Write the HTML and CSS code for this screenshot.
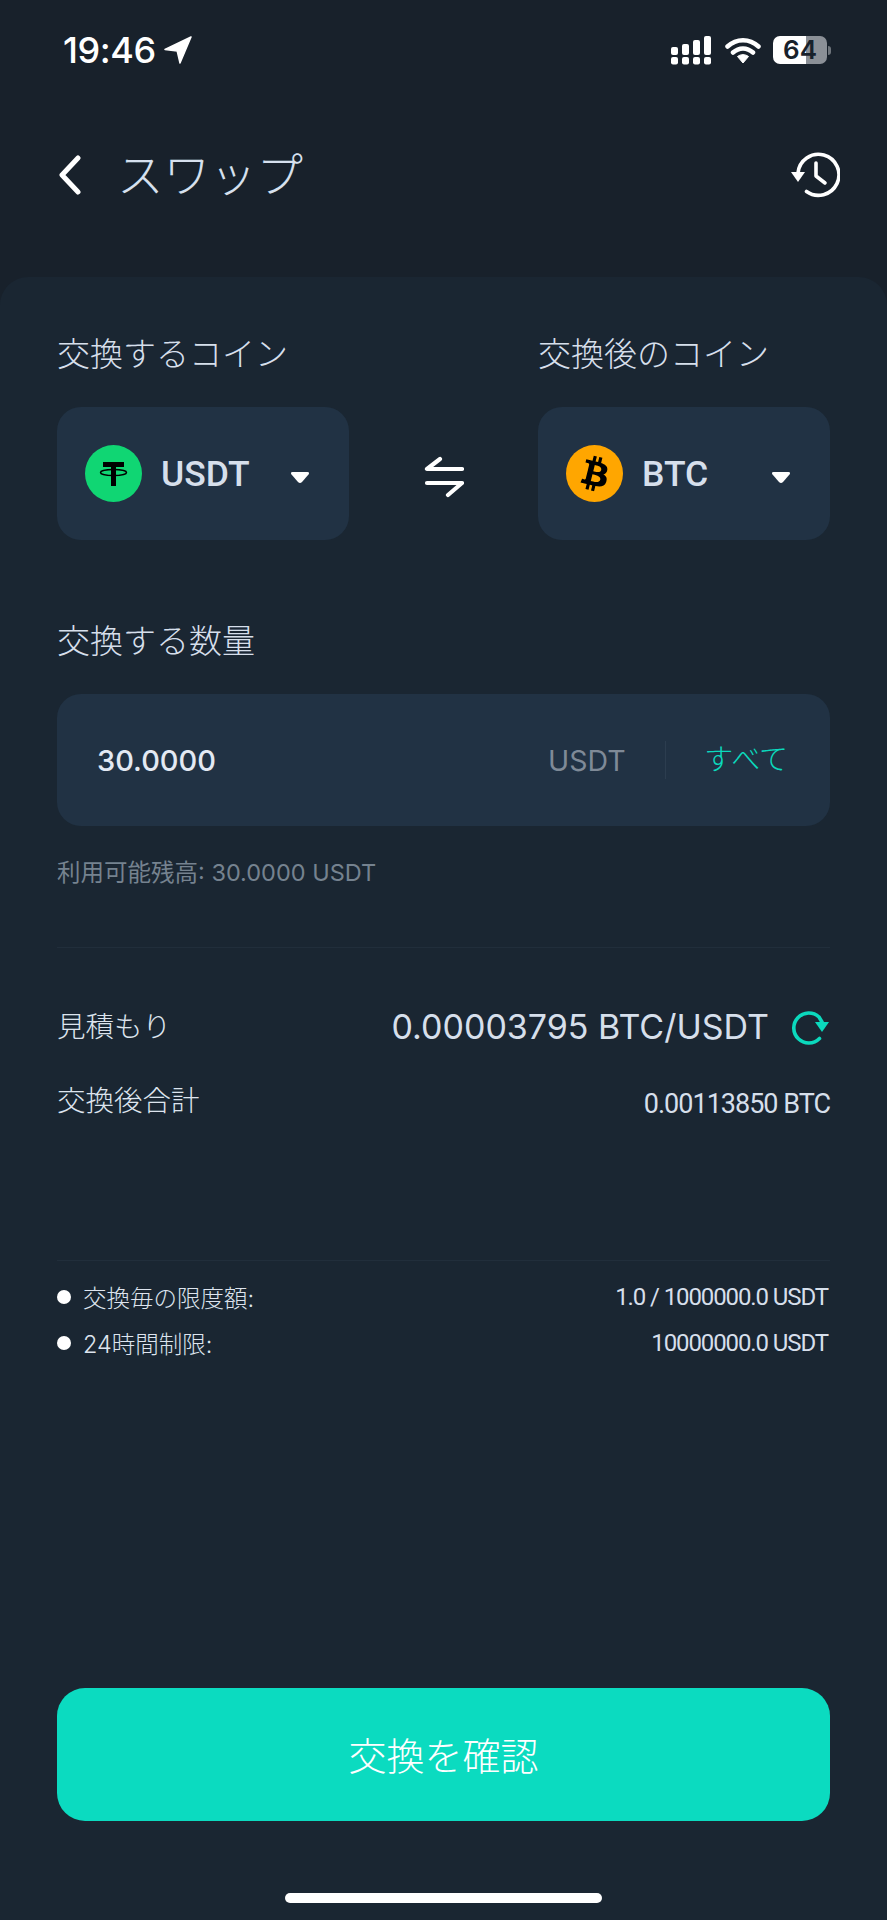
FILE: index.html
```html
<!DOCTYPE html>
<html lang="ja">
<head>
  <meta charset="UTF-8">
  <meta name="viewport" content="width=device-width, initial-scale=1.0">
  <title>スワップ</title>
  <link rel="stylesheet" href="styles.css">
</head>
<body>
  <div class="status-bar">
    <div class="status-time">
      <span>19:46</span>
      <svg class="status-arrow" viewBox="0 0 28 28"><path d="M27 1 1 13.500 13.200 15 16 27z" fill="#fff" stroke="#fff" stroke-width="1.500" stroke-linejoin="round"/></svg>
    </div>
    <div class="status-icons">
      <svg class="status-signal" viewBox="0 0 41 29">
        <g fill="#fff">
          <rect x="0" y="11" width="7" height="8" rx="2"/>
          <rect x="11" y="8" width="7" height="11" rx="2"/>
          <rect x="22" y="4" width="7" height="15" rx="2"/>
          <rect x="33" y="0" width="7" height="19" rx="2"/>
          <rect x="0" y="21" width="7" height="7.500" rx="2"/>
          <rect x="11" y="21" width="7" height="7.500" rx="2"/>
          <rect x="22" y="21" width="7" height="7.500" rx="2"/>
          <rect x="33" y="21" width="7" height="7.500" rx="2"/>
        </g>
      </svg>
      <svg class="status-wifi" viewBox="0 0 36 28">
        <path d="M2.500 10.500C11.500 2 24.500 2 33.500 10.500M8 16.500c6-5.500 14-5.500 20 0" fill="none" stroke="#fff" stroke-width="4.500" stroke-linecap="round"/>
        <path d="M12.500 20.500c3.500-2.500 7.500-2.500 11 0L18 27z" fill="#fff" stroke="#fff" stroke-linejoin="round"/>
      </svg>
      <div class="battery"><span>64</span></div>
      <div class="battery-nub"></div>
    </div>
  </div>

  <header class="topbar">
    <div class="topbar-left">
      <svg class="back-icon" viewBox="0 0 26 40"><path d="M21 3 5 20l16 17" fill="none" stroke="#fff" stroke-width="5" stroke-linecap="round" stroke-linejoin="round"/></svg>
      <h1>スワップ</h1>
    </div>
    <svg class="history-icon" viewBox="0 0 50 46">
      <path d="M8 21A20.500 20.500 0 1 1 16.500 39.500" fill="none" stroke="#fff" stroke-width="3.600" stroke-linecap="round"/>
      <path d="M1 20h14l-7 10z" fill="#fff"/>
      <path d="M26 11v13l9 7" fill="none" stroke="#fff" stroke-width="3.600" stroke-linecap="round" stroke-linejoin="round"/>
    </svg>
  </header>

  <main class="panel">
    <div class="coin-grid">
      <div class="label">交換するコイン</div>
      <div></div>
      <div class="label">交換後のコイン</div>

      <div class="coin-select">
        <svg class="coin-icon" viewBox="0 0 57 57">
          <circle cx="28.500" cy="28.500" r="28.500" fill="#10d673"/>
          <path d="M18 17h21v5h-8v19h-5V22h-8z" fill="#000"/>
          <ellipse cx="28.500" cy="27.500" rx="13" ry="3" fill="none" stroke="#000" stroke-width="1.500"/>
        </svg>
        <span class="coin-name">USDT</span>
        <svg class="caret" viewBox="0 0 20 13"><path d="M2.500 1h15q2.500 0 1 2.500l-6.500 7.500q-2 2-4 0L1.500 3.500Q0 1 2.500 1z" fill="#fff"/></svg>
      </div>

      <svg class="swap-icon" viewBox="0 0 40 42">
        <path d="M16 3 3 13h35M3 27h35L24 39" fill="none" stroke="#fff" stroke-width="4.200" stroke-linecap="round" stroke-linejoin="round"/>
      </svg>

      <div class="coin-select">
        <svg class="coin-icon" viewBox="0 0 32 32">
          <circle cx="16" cy="16" r="16" fill="#ffa600"/>
          <path d="M23.189 14.020c.314-2.096-1.283-3.223-3.465-3.975l.708-2.840-1.728-.430-.690 2.765c-.454-.114-.920-.220-1.385-.326l.695-2.783L15.596 6l-.708 2.839c-.376-.086-.746-.170-1.104-.260l.002-.009-2.384-.595-.460 1.846s1.283.294 1.256.312c.700.175.826.638.805 1.006l-.806 3.235c.048.012.110.030.180.057l-.183-.045-1.130 4.532c-.086.212-.303.531-.793.410.018.025-1.256-.313-1.256-.313l-.858 1.978 2.250.561c.418.105.828.215 1.231.318l-.715 2.872 1.727.430.708-2.840c.472.127.930.245 1.378.357l-.706 2.828 1.728.430.715-2.866c2.948.558 5.164.333 6.097-2.333.752-2.146-.037-3.385-1.588-4.192 1.130-.260 1.980-1.003 2.207-2.538zm-3.950 5.538c-.533 2.147-4.148.986-5.320.695l.950-3.805c1.172.293 4.929.872 4.370 3.110zm.535-5.569c-.487 1.953-3.495.960-4.470.717l.860-3.450c.975.243 4.118.696 3.610 2.733z" fill="#000"/>
        </svg>
        <span class="coin-name">BTC</span>
        <svg class="caret" viewBox="0 0 20 13"><path d="M2.500 1h15q2.500 0 1 2.500l-6.500 7.500q-2 2-4 0L1.500 3.500Q0 1 2.500 1z" fill="#fff"/></svg>
      </div>
    </div>

    <div class="label amount-label">交換する数量</div>
    <div class="amount-box">
      <span class="amount-value">30.0000</span>
      <span class="amount-unit">USDT</span>
      <span class="amount-sep"></span>
      <span class="amount-all">すべて</span>
    </div>
    <div class="balance">利用可能残高: 30.0000 USDT</div>

    <div class="divider divider-first"></div>

    <div class="row quote-row">
      <span class="row-label">見積もり</span>
      <span class="quote-value">
        0.00003795 BTC/USDT
        <svg class="refresh-icon" viewBox="0 0 38 34">
          <path d="M27.500 27.500A15 15 0 1 1 27 6L30 11" fill="none" stroke="#0bd9bd" stroke-width="3.600" stroke-linecap="round"/>
          <path d="M23 11h14l-7 10z" fill="#0bd9bd"/>
        </svg>
      </span>
    </div>
    <div class="row total-row">
      <span class="row-label">交換後合計</span>
      <span class="total-value">0.00113850 BTC</span>
    </div>

    <div class="divider divider-second"></div>

    <div class="row limit-row limit-first">
      <span class="limit-label"><i class="dot"></i>交換毎の限度額:</span>
      <span class="limit-value">1.0 / 1000000.0 USDT</span>
    </div>
    <div class="row limit-row limit-second">
      <span class="limit-label"><i class="dot"></i>24時間制限:</span>
      <span class="limit-value">10000000.0 USDT</span>
    </div>

    <button class="confirm-btn">交換を確認</button>
    <div class="home-bar"></div>
  </main>
</body>
</html>
```

FILE: styles.css
```css
* {
  box-sizing: border-box;
}
html, body {
  margin: 0;
  padding: 0;
}
body {
  width: 887px;
  height: 1920px;
  display: flex;
  flex-direction: column;
  background: #18212b;
  font-family: Inter, "Noto Sans CJK JP", sans-serif;
  overflow: hidden;
}

/* status bar */
.status-bar {
  height: 100px;
  padding: 0 56px 0 63px;
  display: flex;
  justify-content: space-between;
  align-items: center;
}
.status-time {
  display: flex;
  align-items: center;
  gap: 8px;
  color: #fff;
  font-size: 36px;
  font-weight: 500;
  letter-spacing: -0.4px;
}
.status-arrow {
  width: 28px;
  height: 28px;
}
.status-icons {
  display: flex;
  align-items: center;
}
.status-signal {
  width: 41px;
  height: 29px;
  margin-right: 13px;
}
.status-wifi {
  width: 36px;
  height: 28px;
  margin-right: 12px;
}
.battery {
  width: 54px;
  height: 28px;
  border-radius: 7px;
  background: linear-gradient(90deg, #fff 0, #fff 62%, #8b9097 62%);
  color: #18212b;
  font-family: Inter, sans-serif;
  font-size: 26px;
  font-weight: 600;
  line-height: 28px;
  text-align: center;
}
.battery-nub {
  width: 3px;
  height: 9px;
  margin-left: 1px;
  border-radius: 0 3px 3px 0;
  background: #6f757c;
}

/* top bar */
.topbar {
  height: 150px;
  margin-bottom: 27px;
  padding: 0 47px 0 57px;
  display: flex;
  justify-content: space-between;
  align-items: center;
}
.topbar-left {
  display: flex;
  align-items: center;
  gap: 34px;
}
.back-icon {
  width: 26px;
  height: 40px;
}
.topbar h1 {
  margin: -6px 0 0;
  color: #d6e0ee;
  font-family: "Noto Sans CJK JP", sans-serif;
  font-size: 46.500px;
  font-weight: 300;
  line-height: 60px;
}
.history-icon {
  width: 50px;
  height: 46px;
}

/* main panel */
.panel {
  flex: 1;
  display: flex;
  flex-direction: column;
  padding: 55px 57px 17px;
  background: #1a2632;
  border-radius: 28px 28px 0 0;
}
.label {
  color: #d6dfeb;
  font-family: "Noto Sans CJK JP", sans-serif;
  font-size: 33px;
  font-weight: 300;
  line-height: 40px;
}
.coin-grid {
  display: grid;
  grid-template-columns: 292px 1fr 292px;
  row-gap: 35px;
  align-items: center;
  justify-items: center;
}
.coin-grid .label,
.coin-grid .coin-select {
  justify-self: stretch;
}
.coin-select {
  height: 133px;
  padding: 0 39px 0 28px;
  display: flex;
  align-items: center;
  background: #213244;
  border-radius: 24px;
}
.coin-icon {
  width: 57px;
  height: 57px;
  flex: none;
}
.coin-name {
  margin-left: 19px;
  color: #d6dfeb;
  font-family: Roboto, sans-serif;
  font-size: 35.500px;
  font-weight: 500;
}
.caret {
  width: 20px;
  height: 13px;
  margin-top: 8px;
  margin-left: auto;
}
.swap-icon {
  width: 40px;
  height: 42px;
  margin-top: 7px;
}

.amount-label {
  margin-top: 79px;
  margin-bottom: 35px;
}
.amount-box {
  height: 132px;
  padding: 0 42px 0 40px;
  display: flex;
  align-items: center;
  background: #213244;
  border-radius: 24px;
}
.amount-value {
  flex: 1;
  color: #e3e9f3;
  font-size: 29px;
  font-weight: 500;
}
.amount-unit {
  color: #7f8a97;
  font-size: 28.500px;
}
.amount-sep {
  width: 1px;
  height: 38px;
  margin: 0 38.500px 0 39px;
  background: #2c3d4f;
}
.amount-all {
  color: #0bd9bd;
  font-family: "Noto Sans CJK JP", sans-serif;
  font-size: 29px;
  font-weight: 300;
  line-height: 32px;
  margin-top: -6px;
}
.balance {
  margin-top: 32px;
  color: #75828f;
  font-size: 23.500px;
  font-weight: 400;
  line-height: 30px;
}

.divider {
  height: 1px;
  background: #212e3b;
}
.divider-first {
  margin-top: 59px;
}
.divider-second {
  margin-top: 140px;
}

/* info rows */
.row {
  display: flex;
  justify-content: space-between;
  align-items: center;
}
.row-label {
  margin-top: -4px;
  color: #dde4ee;
  font-family: "Noto Sans CJK JP", sans-serif;
  font-size: 28.500px;
  font-weight: 300;
}
.quote-row {
  height: 40px;
  margin-top: 58px;
}
.quote-value {
  display: flex;
  align-items: center;
  gap: 23px;
  color: #d6dfeb;
  font-size: 34px;
  font-weight: 400;
}
.refresh-icon {
  width: 38px;
  height: 34px;
  margin-top: 4px;
}
.total-row {
  height: 40px;
  margin-top: 34px;
}
.total-value {
  margin-top: 8px;
  color: #d6dfeb;
  font-family: Roboto, sans-serif;
  font-size: 27px;
  letter-spacing: -1px;
}
.limit-row {
  height: 30px;
}
.limit-first {
  margin-top: 21px;
}
.limit-second {
  margin-top: 16px;
}
.limit-label {
  display: flex;
  align-items: center;
  color: #dde4ee;
  font-size: 23.500px;
  font-weight: 300;
}
.dot {
  width: 14px;
  height: 14px;
  margin-right: 12px;
  border-radius: 50%;
  background: #fff;
}
.limit-value {
  margin-right: 2px;
  color: #d6dfeb;
  font-family: Roboto, sans-serif;
  font-size: 24px;
  letter-spacing: -1.100px;
}

/* bottom */
.confirm-btn {
  height: 133px;
  margin-top: auto;
  padding-bottom: 3px;
  border: 0;
  border-radius: 28px;
  background: #0bdbc0;
  color: #fff;
  font-family: "Noto Sans CJK JP", sans-serif;
  font-size: 38px;
  font-weight: 300;
}
.home-bar {
  width: 317px;
  height: 10px;
  margin: 72px auto 0;
  border-radius: 5px;
  background: #fff;
}
```
